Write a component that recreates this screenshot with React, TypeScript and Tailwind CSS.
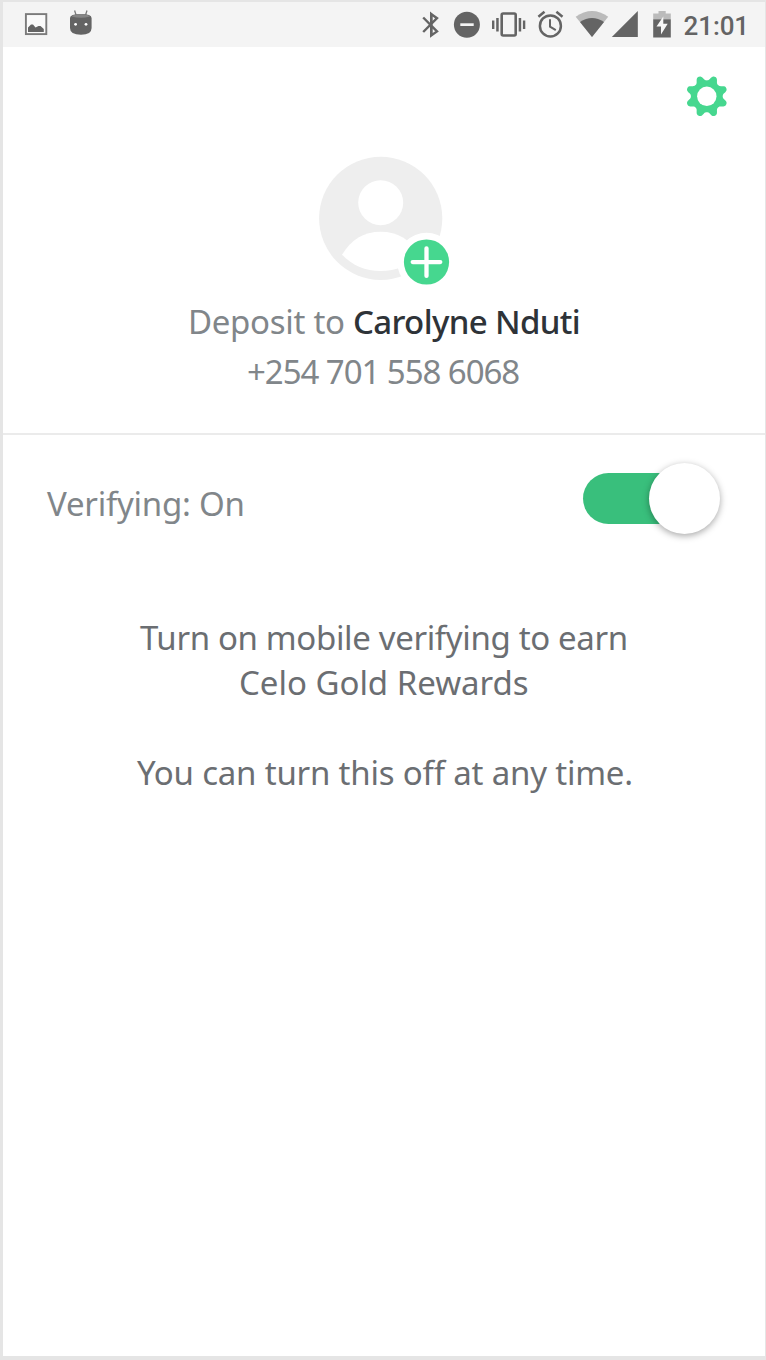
import React from "react";

const INK = "#646464";

function Glyph({ box, className, children }: { box: [number, number]; className?: string; children: React.ReactNode }) {
  return (
    <svg
      viewBox={`${box[0]} 7 ${box[1]} 34`}
      width={box[1]}
      height={34}
      className={`block shrink-0 ${className ?? ""}`}
      fill={INK}
      aria-hidden="true"
    >
      {children}
    </svg>
  );
}

function StatusBar() {
  return (
    <header className="flex h-[45px] shrink-0 items-start justify-between bg-[#f4f4f4] pt-[5px] pr-[16px] pl-[20px]">
      <div className="flex">
        <Glyph box={[23, 42]}>
          <rect x="25.9" y="14.1" width="20.4" height="20" fill="#fafafa" stroke="#7b7b7b" strokeWidth="1.9" />
          <path d="M28 32V27.5L31 24.500H33L35.5 27.500L38.500 26H40.500L43.8 29V32Z" />
        </Glyph>
        <Glyph box={[65, 30]}>
          <path d="M74.6 10.5L76.2 15.5M87 10.5L85.4 15.5" stroke="#7b7b7b" strokeWidth="1.3" />
          <path d="M70 18Q70 14 81 14Q91.6 14 91.6 18V28Q91.6 34.8 81 34.8Q70 34.8 70 28Z" />
          <path d="M71.5 16.5Q73.500 14 81 14Q88 14 90 16.5Q81 19 71.5 16.5Z" fill="#858585" />
          <circle cx="75.6" cy="24.3" r="1.4" fill="#fff" />
          <circle cx="86" cy="24.3" r="1.4" fill="#fff" />
        </Glyph>
      </div>
      <div className="flex">
        <Glyph box={[418, 32]}>
          <path d="M423.2 17.500L437 31.400L431.200 35.500V14L437 18.200L423.200 32" fill="none" stroke={INK} strokeWidth="2.4" />
          <path d="M430 11.500L432.500 14V35L430 37.500Z" />
        </Glyph>
        <Glyph box={[450, 36]}>
          <circle cx="466.900" cy="24.700" r="13" />
          <rect x="460.300" y="23.300" width="13.400" height="2.700" fill="#f4f4f4" />
        </Glyph>
        <Glyph box={[486, 46]}>
          <rect x="501.700" y="13.500" width="14" height="22" rx="1.500" fill="none" stroke={INK} strokeWidth="2.600" />
          <path d="M496.200 18h2.500v13.500h-2.500zM492 20.600h2.400v8.300h-2.400zM518.700 18h2.500v13.500h-2.500zM522.900 20.600h2.400v8.300h-2.400z" />
        </Glyph>
        <Glyph box={[532, 38]}>
          <g fill="none" stroke={INK} strokeWidth="2.500">
            <circle cx="550.400" cy="25.900" r="10.500" />
            <path d="M538.400 16.800L544.500 11.800M562.500 16.800L556.400 11.800" />
            <path d="M550 19.300V26.700L555.800 30.200" strokeWidth="2" />
          </g>
        </Glyph>
        <Glyph box={[570, 40]}>
          <path d="M592 37L575.700 16.700Q592 5.500 608.200 16.700Z" fill="#bbbbbb" />
          <path d="M592 37L580 22Q592 14 604 22Z" />
        </Glyph>
        <Glyph box={[610, 34]}>
          <path d="M611.800 37H637.800V11Z" />
        </Glyph>
        <Glyph box={[644, 40]}>
          <path d="M653.200 13.500H658.500V11H665.700V13.500H670.800V19.500H653.200Z" fill="#bbbbbb" />
          <path d="M653.200 19.300H670.800V37.500H653.200Z" />
          <path d="M663.300 16.500L656.500 26.500H661V34.500L667.700 23.800H663.300Z" fill="#f7f7f7" />
        </Glyph>
        <span className="font-['Roboto',sans-serif] text-[26px] leading-[38px] font-medium tracking-[-0.1px] text-[#646464]">
          21:01
        </span>
      </div>
    </header>
  );
}

function gearOutline(cx: number, cy: number) {
  const pts: string[] = [];
  for (let i = 0; i < 240; i++) {
    const t = (i / 240) * Math.PI * 2;
    const wave = Math.tanh(1.2 * Math.cos(8 * (t - Math.PI / 8)) - 0.1) / Math.tanh(1.2);
    const r = 18.6 + 2.6 * wave;
    pts.push(`${(cx + r * Math.cos(t)).toFixed(2)} ${(cy + r * Math.sin(t)).toFixed(2)}`);
  }
  return `M${pts.join("L")}Z`;
}

function Gear() {
  return (
    <svg width="44" height="44" viewBox="685 74 44 44" aria-hidden="true">
      <path d={gearOutline(706.8, 96.3)} fill="#46d78f" />
      <circle cx="706.8" cy="96.3" r="9.700" fill="#fff" />
    </svg>
  );
}

function Avatar() {
  return (
    <svg className="block" width="132" height="132" viewBox="318 155 132 132" aria-hidden="true">
      <circle cx="380.700" cy="218.300" r="61.600" fill="#eeeeee" />
      <circle cx="380.700" cy="202.700" r="22.500" fill="#fff" />
      <path d="M342 254.700C351 239.500 364 231.700 380.700 231.700S410.500 239.500 419.400 254.700C409 265.500 396 271 380.700 271S352.500 265.500 342 254.700Z" fill="#fff" />
      <circle cx="426.500" cy="262" r="29.200" fill="#fff" />
      <circle cx="426.500" cy="262" r="22.600" fill="#46d78f" />
      <path d="M426.500 248.300V275.900M412.700 262.100H440.300" stroke="#fff" strokeWidth="4.300" strokeLinecap="round" />
    </svg>
  );
}

export default function App() {
  return (
    <div className="flex h-[1360px] w-[766px] flex-col border-t-2 border-r border-b-4 border-l-3 border-[#e5e5e5] bg-white font-['Noto_Sans',sans-serif]">
      <StatusBar />
      <section className="flex h-[388px] shrink-0 flex-col border-b-2 border-[#ebebeb]">
        <div className="flex h-[71px] justify-end pt-[27px] pr-[36px]">
          <button type="button" aria-label="Settings" className="h-[44px]">
            <Gear />
          </button>
        </div>
        <div className="mt-[37px] pl-[315px]">
          <Avatar />
        </div>
        <p className="mt-[10px] pl-[185px] text-[33px] leading-[50px] font-[370] tracking-[-0.3px] whitespace-nowrap text-[#81868a]">
          Deposit to <span className="font-[480] tracking-[-0.65px] text-[#2e3338]">Carolyne Nduti</span>
        </p>
        <p className="pl-[244px] text-[33px] leading-[50px] font-[370] tracking-[-1.05px] whitespace-nowrap text-[#81868a]">+254 701 558 6068</p>
      </section>
      <section className="flex h-[130px] shrink-0 items-start justify-between pt-[28px] pr-[45px] pl-[44px]">
        <span className="mt-[16px] text-[33px] leading-[50px] font-[370] tracking-[-0.25px] whitespace-nowrap text-[#81868a]">Verifying: On</span>
        <button type="button" role="switch" aria-checked="true" aria-label="Verifying" className="flex h-[71px] w-[137px] items-center">
          <span className="flex h-[51px] w-full items-center justify-end rounded-full bg-linear-to-r from-[#39bf7c] from-75% to-transparent to-75%">
            <span className="size-[71px] shrink-0 rounded-full bg-white shadow-[0_2px_7px_rgba(0,0,0,0.35)]" />
          </span>
        </button>
      </section>
      <section className="pt-[50px] text-[33px] leading-[45px] font-[370] whitespace-nowrap text-[#6b6e72]">
        <p className="pl-[137px] tracking-[-0.35px]">Turn on mobile verifying to earn</p>
        <p className="pl-[236px] tracking-[-0.02px]">Celo Gold Rewards</p>
        <p className="mt-[45px] pl-[134px] tracking-[-0.2px]">You can turn this off at any time.</p>
      </section>
    </div>
  );
}
